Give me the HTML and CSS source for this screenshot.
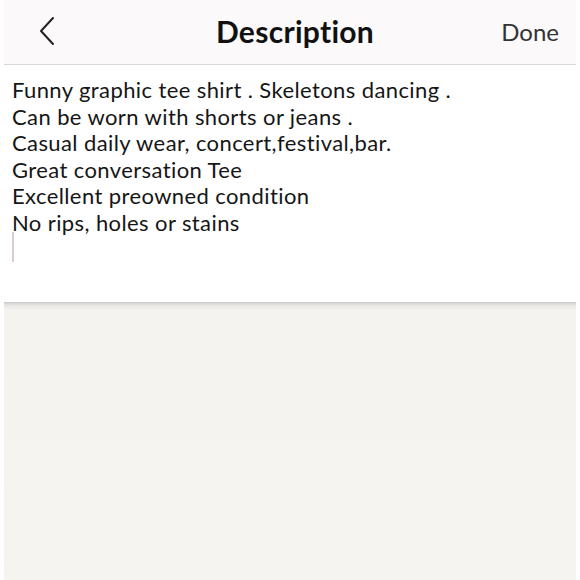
FILE: index.html
```html
<!DOCTYPE html>
<html>
<head>
<meta charset="utf-8">
<link rel="stylesheet" href="styles.css">
</head>
<body>
<div class="frame">
  <header class="bar">
    <svg class="back" width="18" height="30" viewBox="0 0 18 30"><path d="M15 2 L3 15 L15 28" fill="none" stroke="#222" stroke-width="2" stroke-linecap="round" stroke-linejoin="round"/></svg>
    <div class="title">Description</div>
    <div class="done">Done</div>
  </header>
  <section class="editor">
    <div class="line">Funny graphic tee shirt . Skeletons dancing .</div>
    <div class="line">Can be worn with shorts or jeans .</div>
    <div class="line">Casual daily wear, concert,festival,bar.</div>
    <div class="line">Great conversation Tee</div>
    <div class="line">Excellent preowned condition</div>
    <div class="line">No rips, holes or stains</div>
    <div class="line"><span class="caret"></span></div>
  </section>
  <section class="rest"></section>
</div>
</body>
</html>
```

FILE: styles.css
```css
html, body { margin: 0; padding: 0; background: #ffffff; }
body { width: 580px; height: 580px; overflow: hidden; }
.frame {
  margin: 0 4px;
  height: 580px;
  display: flex;
  flex-direction: column;
  font-family: "Lato", "Noto Sans", sans-serif;
  color: #1a1a1a;
}
.bar {
  height: 64px;
  flex: none;
  background: #fbf9fa;
  border-bottom: 1px solid #d8d8d8;
  display: flex;
  align-items: center;
  position: relative;
}
.back { margin-left: 34px; margin-top: -2px; }
.title {
  position: absolute;
  left: 0; right: 0;
  top: 13px;
  text-align: center;
  font-size: 30px;
  font-weight: 700;
  color: #111;
  padding-left: 10px;
  letter-spacing: 0.3px;
}
.done {
  margin-left: auto;
  margin-right: 17px;
  margin-top: -2px;
  font-size: 24px;
  color: #333;
}
.editor {
  height: 237px;
  flex: none;
  background: #fff;
  padding: 12px 8px 0;
  box-sizing: border-box;
  font-size: 22px;
  line-height: 26.5px;
  letter-spacing: 0.4px;
  color: #161616;
}
.line { white-space: nowrap; height: 26.5px; }
.caret {
  display: inline-block;
  width: 2px;
  height: 30px;
  background: #dccbd0;
  vertical-align: top;
  margin-top: -4px;
}
.rest {
  flex: 1;
  background: linear-gradient(#c9c9c9, #e6e5e3 3px, #f4f3f0 8px, #f5f4f1);
}
```
